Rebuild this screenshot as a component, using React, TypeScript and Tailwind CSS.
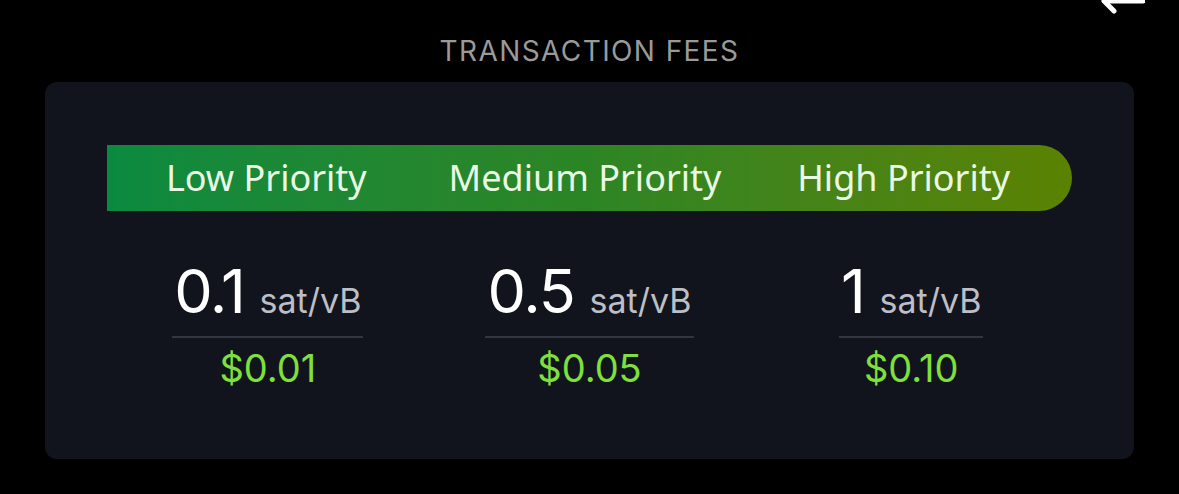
import React from "react";

const tiers = [
  { label: "Low Priority", rate: "0.1", usd: "$0.01" },
  { label: "Medium Priority", rate: "0.5", usd: "$0.05" },
  { label: "High Priority", rate: "1", usd: "$0.10" },
];

export default function App() {
  return (
    <div className="relative w-[1179px] h-[494px] bg-black overflow-hidden font-['Inter','Noto_Sans',sans-serif]">
      {/* back arrow, cut off by the top edge */}
      <svg className="absolute right-[34px] -top-[10px] w-[44px] h-[24px]" viewBox="0 0 44 24" fill="none">
        <path d="M42 11H6" stroke="white" strokeWidth="5" strokeLinecap="round" />
        <path d="M13 2L3 11L13 21" stroke="white" strokeWidth="5" strokeLinecap="round" strokeLinejoin="round" />
      </svg>

      <div className="pt-[35px] flex justify-center">
        <h2 className="text-[28px] leading-[32px] tracking-[0.05em] text-[#9a9a9a] font-normal">TRANSACTION FEES</h2>
      </div>

      <div className="mt-[15px] mx-[45px] h-[377px] rounded-[12px] bg-[#11141d] px-[62px] pt-[63px]">
        {/* priority bar */}
        <div className="h-[66px] rounded-r-full bg-gradient-to-r from-[#0a8a3f] via-[#2c8524] to-[#5a8200] grid grid-cols-3 items-center pr-[9px] font-['Noto_Sans',sans-serif] text-[36px] text-[#e9f9e6]">
          {tiers.map((t) => (
            <div key={t.label} className="text-center">{t.label}</div>
          ))}
        </div>

        {/* rates */}
        <div className="grid grid-cols-3 mt-[46px]">
          {tiers.map((t) => (
            <div key={t.label} className="flex flex-col items-center">
              <div className="flex items-baseline gap-[15px] px-[2px] pb-[10px] border-b-2 border-[#33363f]">
                <span className="text-[61px] leading-[68px] text-white tracking-[-0.02em]">{t.rate}</span>
                <span className="text-[34px] text-[#bdbec6]">sat/vB</span>
              </div>
              <div className="mt-[8px] text-[38px] leading-[44px] text-[#7fe03b]">{t.usd}</div>
            </div>
          ))}
        </div>
      </div>
    </div>
  );
}
